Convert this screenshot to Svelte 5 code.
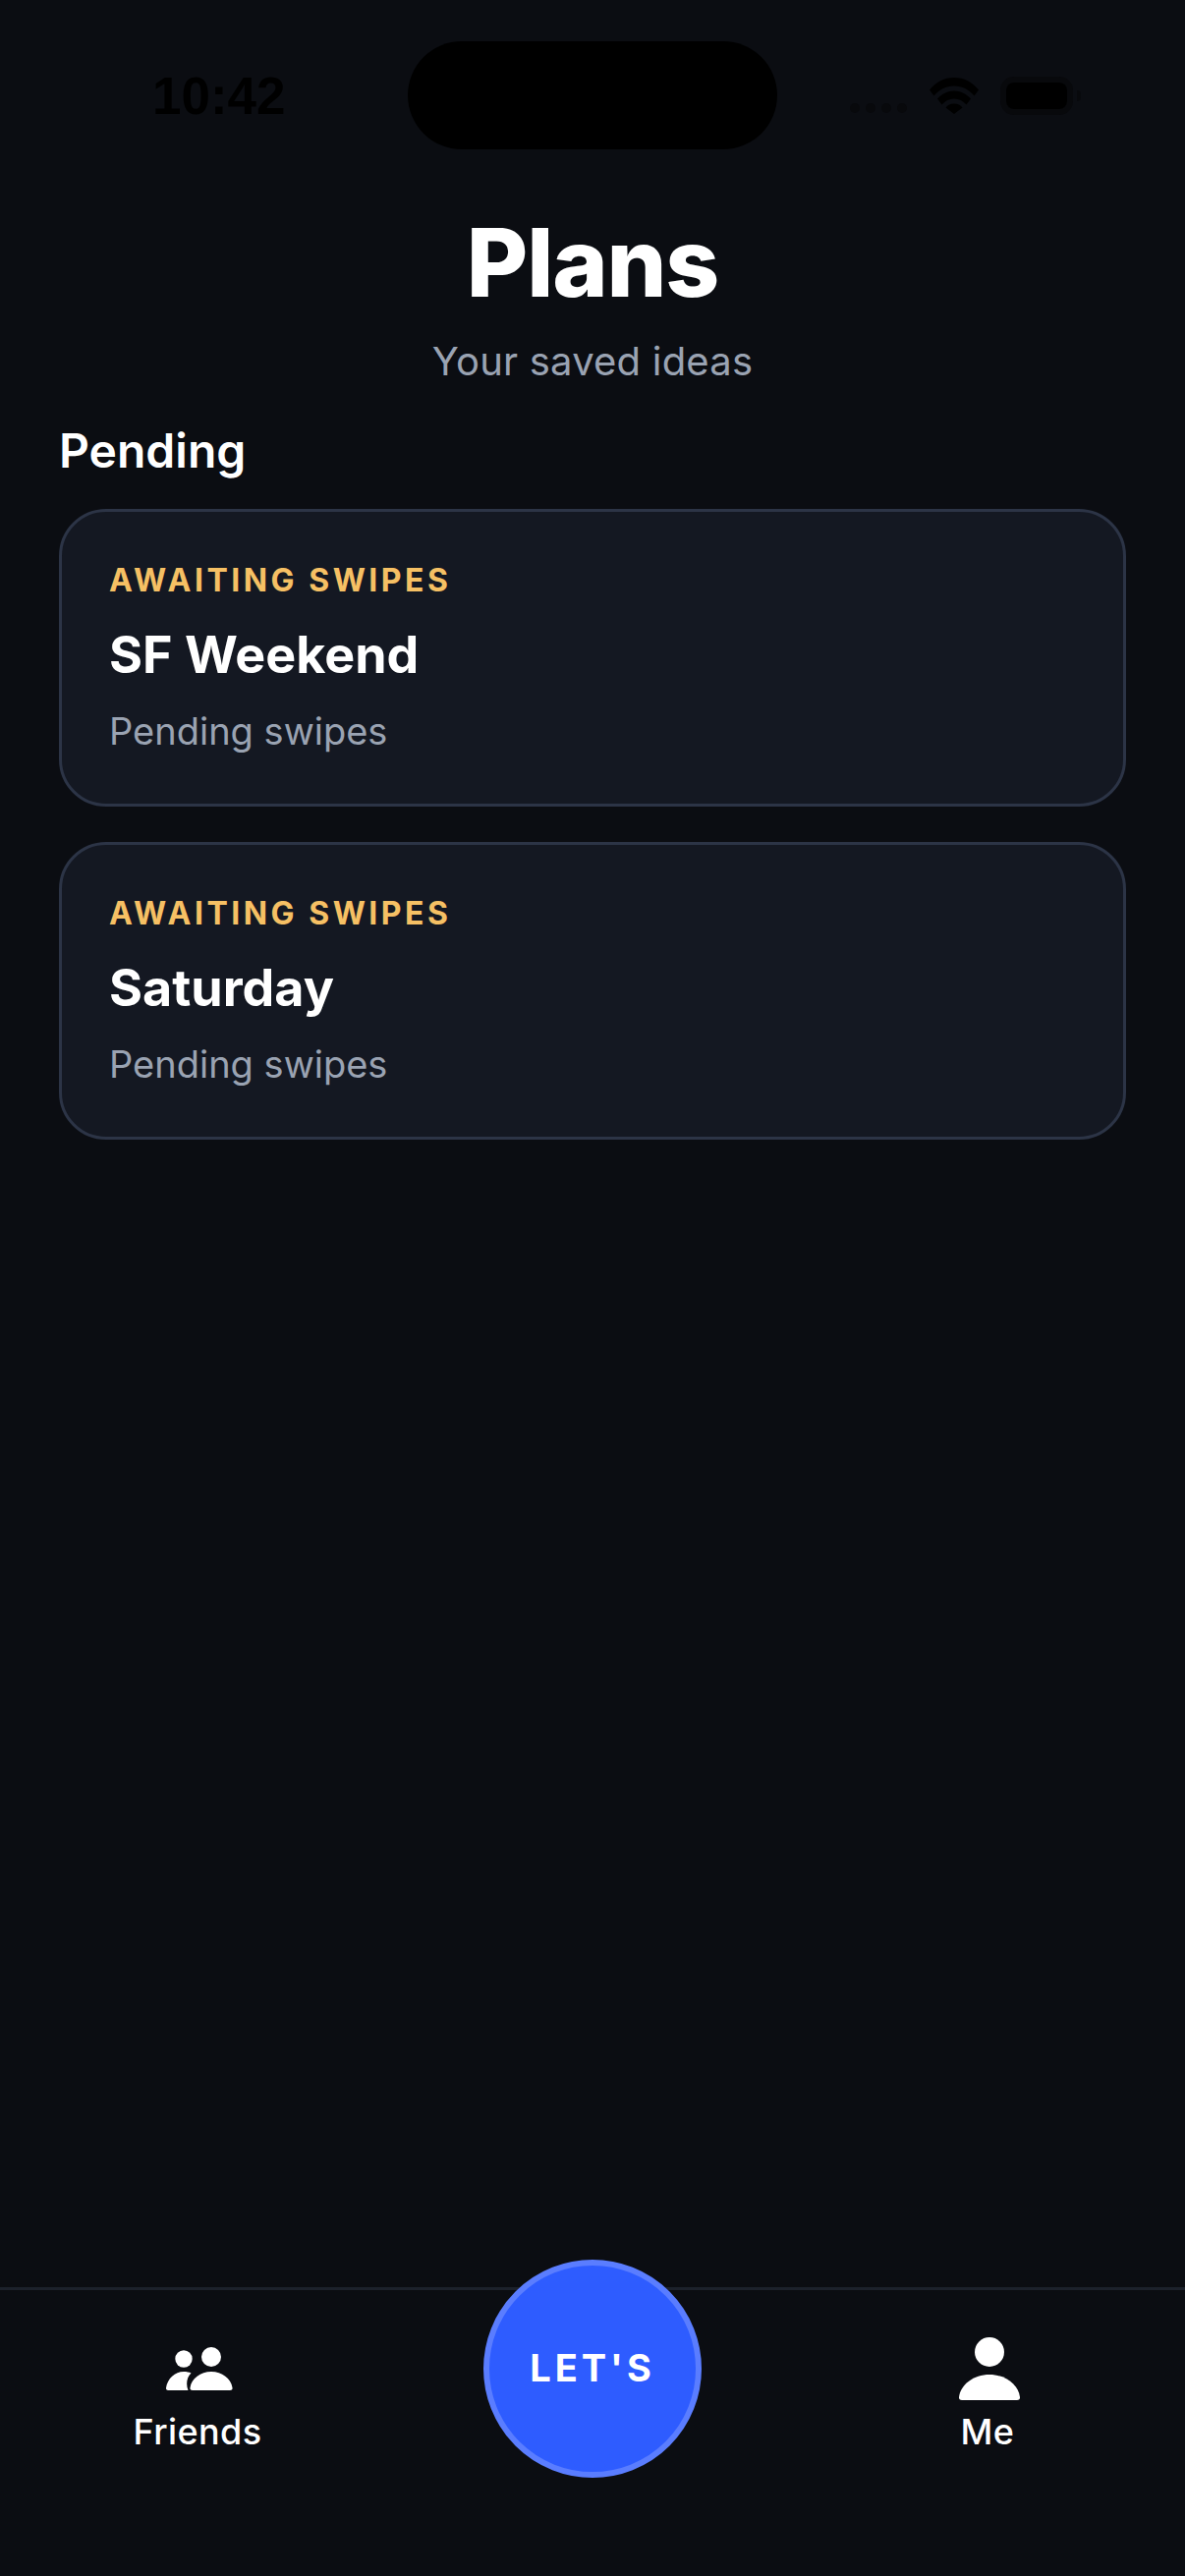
<script lang="ts">
  const plans = [{ name: "SF Weekend" }, { name: "Saturday" }];
</script>

<div class="screen">
  <div class="status">
    <span class="time">10:42</span>
    <div class="island"></div>
    <div class="signal">
      <i></i><i></i><i></i><i></i>
    </div>
    <svg class="wifi" width="50" height="37" viewBox="0 0 50 37">
      <path d="M0 12.500C6.500 4.500 15 0 25 0s18.500 4.500 25 12.500l-4.500 6C40 12 33 8.500 25 8.500S10 12 4.500 18.500Z" />
      <path d="M8 21.500C12.500 16.500 18.500 13.500 25 13.500S37.500 16.500 42 21.500l-4.500 6C34 23.500 30 21.500 25 21.500S16 23.500 12.500 27.500Z" />
      <path d="M16.500 30.500C18.500 28 21.500 26.500 25 26.500S31.500 28 33.500 30.500L25 37Z" />
    </svg>
    <div class="battery"><div class="battery-fill"></div></div>
    <div class="battery-nub"></div>
  </div>

  <header class="header">
    <h1>Plans</h1>
    <p>Your saved ideas</p>
  </header>

  <main class="content">
    <h2>Pending</h2>
    <div class="cards">
      {#each plans as plan}
        <div class="card">
          <div class="card-status">AWAITING SWIPES</div>
          <div class="card-title">{plan.name}</div>
          <div class="card-sub">Pending swipes</div>
        </div>
      {/each}
    </div>
  </main>

  <nav class="tabbar">
    <div class="tab">
      <div class="tab-icon">
        <svg width="68" height="44" viewBox="0 0 68 44" fill="#fff">
          <circle cx="18" cy="12" r="8.700" />
          <circle cx="46" cy="10" r="10" />
          <path d="M2 44c-1.300 0-2.200-1-2-2.500C1.500 32 9 25 18 25c3 0 5.500.5 7.500 1.500C21 30.500 20 38 22.500 44Z" />
          <path d="M27 44c-2 0-2.800-1-2.500-2.800C26 32 35 25 46 25s20 7 21.500 16.200c.3 1.800-.5 2.800-2.500 2.800Z" />
        </svg>
      </div>
      <span>Friends</span>
    </div>
    <button class="lets">LET'S</button>
    <div class="tab tab-me">
      <div class="tab-icon">
        <svg width="62" height="64" viewBox="0 0 62 64" fill="#fff">
          <circle cx="31" cy="15" r="15" />
          <path d="M3 64c-2 0-3.200-1-3-3C1.500 48 15 38 31 38s29.500 10 31 23c.2 2-1 3-3 3Z" />
        </svg>
      </div>
      <span>Me</span>
    </div>
  </nav>
</div>

<style>
  :global(body) {
    margin: 0;
    background: #0b0d12;
  }

  .screen {
    position: relative;
    width: 1206px;
    height: 2622px;
    background: #0b0d12;
    color: #fff;
    font-family: Inter, "Liberation Sans", sans-serif;
    overflow: hidden;
    display: flex;
    flex-direction: column;
  }

  .status {
    height: 217px;
    flex-shrink: 0;
    position: relative;
  }

  .time {
    position: absolute;
    left: 155px;
    top: 69px;
    font-family: "Liberation Sans", sans-serif;
    font-size: 53px;
    line-height: 58px;
    font-weight: 700;
    color: #000;
  }

  .island {
    position: absolute;
    left: 415px;
    top: 42px;
    width: 376px;
    height: 110px;
    border-radius: 55px;
    background: #000;
  }

  .signal {
    position: absolute;
    left: 865px;
    top: 105px;
    display: flex;
    gap: 6px;
  }

  .signal i {
    width: 10px;
    height: 10px;
    border-radius: 50%;
    background: #08090c;
  }

  .wifi {
    position: absolute;
    left: 946px;
    top: 79px;
    fill: #000;
  }

  .battery {
    position: absolute;
    left: 1018px;
    top: 78px;
    width: 74px;
    height: 39px;
    box-sizing: border-box;
    border: 6px solid #08090c;
    border-radius: 14px;
  }

  .battery-fill {
    width: 100%;
    height: 100%;
    background: #000;
    border-radius: 8px;
  }

  .battery-nub {
    position: absolute;
    left: 1096px;
    top: 92px;
    width: 4px;
    height: 11px;
    border-radius: 0 4px 4px 0;
    background: #08090c;
  }

  .header {
    text-align: center;
  }

  .header h1 {
    margin: 0;
    font-size: 96px;
    line-height: 100px;
    font-weight: 800;
    letter-spacing: -1.200px;
  }

  .header p {
    margin: 28px 0 0;
    font-size: 40px;
    line-height: 46px;
    letter-spacing: 0.200px;
    color: #9aa3b2;
  }

  .content {
    padding: 0 60px;
  }

  .content h2 {
    margin: 40px 0 0;
    font-size: 48px;
    line-height: 56px;
    font-weight: 600;
  }

  .cards {
    margin-top: 31px;
    display: flex;
    flex-direction: column;
    gap: 36px;
  }

  .card {
    box-sizing: border-box;
    height: 303px;
    padding: 52px 48px 0;
    background: #141822;
    border: 3px solid #2c3446;
    border-radius: 48px;
  }

  .card-status {
    font-size: 32px;
    line-height: 36px;
    font-weight: 700;
    letter-spacing: 3.500px;
    color: #f6c064;
  }

  .card-title {
    margin-top: 27px;
    font-size: 52px;
    line-height: 62px;
    font-weight: 700;
  }

  .card-sub {
    margin-top: 24px;
    font-size: 38px;
    line-height: 44px;
    color: #9aa3b2;
  }

  .tabbar {
    position: absolute;
    left: 0;
    right: 0;
    top: 2328px;
    height: 294px;
    box-sizing: border-box;
    border-top: 3px solid #1c212b;
    display: grid;
    grid-template-columns: 402px 1fr 402px;
  }

  .tab {
    display: flex;
    flex-direction: column;
    align-items: center;
    padding-top: 48px;
    gap: 9px;
    font-size: 36px;
    line-height: 46px;
    font-weight: 500;
    letter-spacing: 0.400px;
  }

  .tab-me {
    grid-column: 3;
  }

  .tab-icon {
    height: 64px;
    margin-left: 3px;
    display: flex;
    align-items: center;
  }

  .tab-icon svg {
    display: block;
  }

  .lets {
    position: absolute;
    left: 492px;
    top: -31px;
    width: 222px;
    height: 222px;
    box-sizing: border-box;
    border-radius: 50%;
    border: 6px solid #5a7dff;
    background: #2e5cff;
    color: #fff;
    font-family: inherit;
    font-size: 38px;
    font-weight: 700;
    letter-spacing: 4px;
    padding: 0 0 2px;
  }
</style>
